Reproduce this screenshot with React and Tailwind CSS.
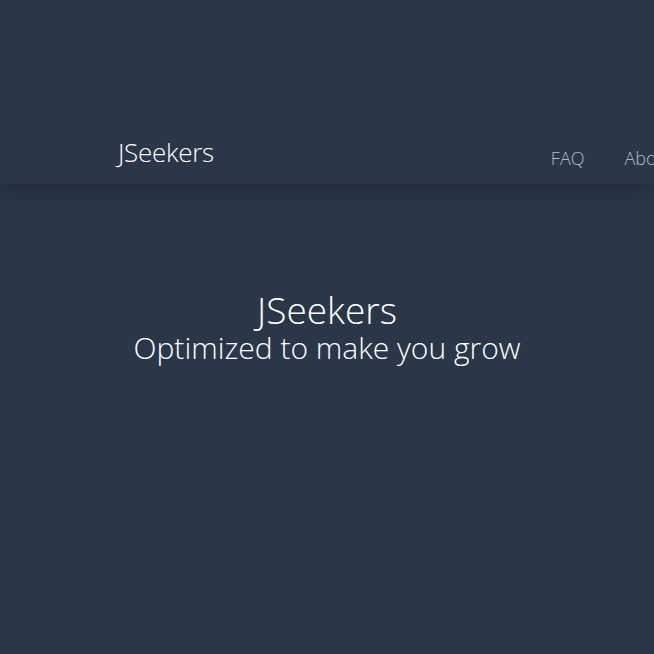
export default function App() {
  return (
    <div className="min-h-screen bg-[#293749] text-white overflow-hidden" style={{ fontFamily: '"Open Sans", sans-serif' }}>
      <header className="relative z-10 h-[184px] bg-[#293749] shadow-[0_4px_24px_rgba(0,0,0,0.25)] flex items-end pb-[19px] whitespace-nowrap">
        <div className="shrink-0 pl-[118px] text-[26px] leading-none font-light tracking-[-0.3px] text-white">JSeekers</div>
        <nav className="shrink-0 ml-[337px] flex gap-[40px] text-[18px] leading-none font-light text-[#b6bdc7] translate-y-[2px]">
          <a>FAQ</a>
          <a>About</a>
        </nav>
      </header>
      <main className="flex flex-col items-center pt-[107px] text-center font-light">
        <h1 className="text-[37px] leading-[38px]">JSeekers</h1>
        <p className="text-[30px] leading-[38px]">Optimized to make you grow</p>
      </main>
    </div>
  );
}
